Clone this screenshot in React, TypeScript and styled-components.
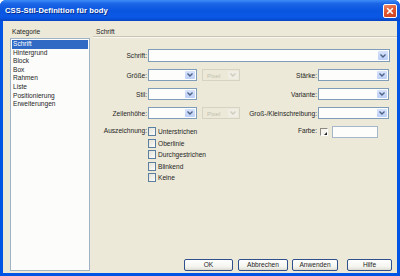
import React from 'react';
import styled, { createGlobalStyle } from 'styled-components';

const GlobalStyle = createGlobalStyle`
  html, body {
    margin: 0;
    padding: 0;
    background: #ffffff;
  }
  body {
    font-family: 'Liberation Sans', Arial, sans-serif;
  }
`;

const palette = {
  xpBlue: '#0054e3',
  face: '#ece9d8',
  field: '#7f9db9',
  text: '#1e1e1e',
  disabled: '#aca899',
  select: '#316ac5',
};

const Window = styled.div`
  width: 400px;
  height: 276px;
  display: flex;
  flex-direction: column;
  background: ${palette.xpBlue};
  border-radius: 6px 6px 0 0;
  overflow: hidden;
`;

const TitleBar = styled.div`
  height: 21px;
  flex-shrink: 0;
  display: flex;
  align-items: center;
  justify-content: space-between;
  padding: 0 3px 0 5px;
  background: linear-gradient(180deg, #3c8df8 0%, #1a64e6 18%, #0a56e0 50%, #0b58e6 80%, #0645c6 100%);
`;

const Title = styled.span`
  color: #ffffff;
  font-weight: bold;
  font-size: 7.6px;
  letter-spacing: 0.1px;
  text-shadow: 1px 1px 0 #0a2f8c;
`;

const CloseButton = styled.div`
  width: 14px;
  height: 14px;
  box-sizing: border-box;
  border: 1px solid #ffffff;
  border-radius: 2px;
  background: linear-gradient(160deg, #ef8a6a 0%, #e2582f 45%, #cc4020 100%);
  display: flex;
  align-items: center;
  justify-content: center;
`;

const Frame = styled.div`
  flex: 1;
  display: flex;
  margin: 0 3px 3px;
  background: ${palette.face};
  font-size: 6.6px;
  color: ${palette.text};
  min-height: 0;
`;

const LeftColumn = styled.div`
  width: 90px;
  flex-shrink: 0;
  display: flex;
  flex-direction: column;
  padding: 7px 0 2px 7px;
  box-sizing: border-box;
`;

const Caption = styled.div`
  height: 8px;
  line-height: 8px;
  margin: 0 0 2px 2px;
`;

const CategoryList = styled.ul`
  flex: 1;
  margin: 0;
  padding: 1px;
  width: 80px;
  box-sizing: border-box;
  list-style: none;
  background: #fcfdfb;
  border: 1px solid #9fb2c6;
`;

const CategoryItem = styled.li<{ $active?: boolean }>`
  height: 8.6px;
  line-height: 8.6px;
  padding-left: 1px;
  background: ${(p) => (p.$active ? palette.select : 'transparent')};
  color: ${(p) => (p.$active ? '#ffffff' : palette.text)};
`;

const RightColumn = styled.div`
  flex: 1;
  display: flex;
  flex-direction: column;
  padding-bottom: 2px;
`;

const PanelHeader = styled.div`
  height: 16px;
  box-sizing: border-box;
  padding: 7px 0 0 3px;
  line-height: 8px;
  border-bottom: 1px solid #c9c5b2;
  box-shadow: 0 1px 0 #f8f7f1;
`;

const Form = styled.div`
  padding-top: 12px;
  display: flex;
  flex-direction: column;
  gap: 7px;
`;

const FieldRow = styled.div<{ $h?: number }>`
  display: grid;
  grid-template-columns: 55px 54px 38px 78px 72px;
  height: ${(p) => p.$h || 12}px;
  align-items: center;
`;

const Label = styled.label<{ $top?: boolean }>`
  text-align: right;
  padding-right: 1px;
  white-space: nowrap;
  align-self: ${(p) => (p.$top ? 'start' : 'center')};
  line-height: 9px;
`;

const TextInput = styled.div<{ $span?: boolean }>`
  grid-column: ${(p) => (p.$span ? '2 / -1' : 'auto')};
  height: 100%;
  box-sizing: border-box;
  border: 1px solid ${palette.field};
  background: #fdfefc;
  display: flex;
  justify-content: flex-end;
  align-items: stretch;
  padding: 1px;
`;

const Select = styled.div<{ $w: number; $disabled?: boolean }>`
  width: ${(p) => p.$w}px;
  height: 12px;
  box-sizing: border-box;
  border: 1px solid ${(p) => (p.$disabled ? '#d6d3c4' : palette.field)};
  background: ${(p) => (p.$disabled ? palette.face : '#fdfefc')};
  color: #c2bfae;
  display: flex;
  align-items: center;
  justify-content: space-between;
  padding: 1px;
`;

const SelectText = styled.span`
  padding-left: 3px;
  font-size: 6.2px;
`;

const ArrowBox = styled.div<{ $disabled?: boolean }>`
  width: 10px;
  height: 100%;
  box-sizing: border-box;
  border-radius: 1px;
  background: ${(p) => (p.$disabled ? '#efede4' : 'linear-gradient(180deg, #d7e3fb 0%, #bccff7 100%)')};
  display: flex;
  align-items: center;
  justify-content: center;
  margin-left: auto;
`;

const CheckList = styled.div`
  grid-column: 2 / 4;
  align-self: start;
  display: flex;
  flex-direction: column;
`;

const CheckItem = styled.div`
  height: 11.6px;
  display: flex;
  align-items: flex-start;
  gap: 2px;
`;

const CheckBox = styled.span`
  width: 8px;
  height: 9px;
  margin-top: 1px;
  box-sizing: border-box;
  border: 1px solid #5d7f9f;
  background: linear-gradient(135deg, #e3e2da 0%, #fbfbf9 100%);
`;

const CheckText = styled.span`
  line-height: 11px;
`;

const ColorField = styled.div`
  align-self: start;
  display: flex;
  align-items: center;
  gap: 4px;
  padding-left: 2px;
  height: 12px;
`;

const Swatch = styled.div`
  width: 8px;
  height: 8px;
  box-sizing: border-box;
  border: 1px solid #8c8a80;
  border-right-color: #ffffff;
  border-bottom-color: #ffffff;
  background: #f4f3ee;
  position: relative;
  &::after {
    content: '';
    position: absolute;
    right: 0;
    bottom: 0;
    border-left: 3px solid transparent;
    border-bottom: 3px solid #222;
  }
`;

const ColorInput = styled.div`
  width: 46px;
  height: 12px;
  box-sizing: border-box;
  border: 1px solid #a5b7c9;
  background: #fdfefc;
`;

const Spacer = styled.div`
  flex: 1;
`;

const ButtonBar = styled.div`
  display: flex;
  justify-content: flex-end;
  padding-right: 5px;
`;

const DialogButton = styled.button<{ $w: number; $gap?: number }>`
  width: ${(p) => p.$w}px;
  height: 12px;
  margin-left: ${(p) => p.$gap ?? 4}px;
  padding: 0;
  box-sizing: border-box;
  border: 1px solid #30508c;
  border-radius: 2px;
  background: linear-gradient(180deg, #ffffff 0%, #f3f3ee 70%, #dcdbd2 100%);
  font-family: 'Liberation Sans', Arial, sans-serif;
  font-size: 6.6px;
  color: ${palette.text};
  line-height: 10px;
`;

const Chevron = ({ disabled }: { disabled?: boolean }) => (
  <svg width="6" height="4" viewBox="0 0 6 4">
    <path d="M0.5 0.5 L3 3 L5.5 0.5" fill="none" stroke={disabled ? '#cfccbe' : '#4d6185'} strokeWidth="1.4" />
  </svg>
);

function Dropdown({ w, text, disabled }: { w: number; text?: string; disabled?: boolean }) {
  return (
    <Select $w={w} $disabled={disabled}>
      {text && <SelectText>{text}</SelectText>}
      <ArrowBox $disabled={disabled}>
        <Chevron disabled={disabled} />
      </ArrowBox>
    </Select>
  );
}

const categories = ['Schrift', 'Hintergrund', 'Block', 'Box', 'Rahmen', 'Liste', 'Positionierung', 'Erweiterungen'];
const decorations = ['Unterstrichen', 'Oberlinie', 'Durchgestrichen', 'Blinkend', 'Keine'];

export default function App() {
  return (
    <>
      <GlobalStyle />
      <Window>
        <TitleBar>
          <Title>CSS-Stil-Definition für body</Title>
          <CloseButton>
            <svg width="8" height="8" viewBox="0 0 8 8">
              <path d="M1.2 1.2 L6.8 6.8 M6.8 1.2 L1.2 6.8" stroke="#ffffff" strokeWidth="1.6" />
            </svg>
          </CloseButton>
        </TitleBar>
        <Frame>
          <LeftColumn>
            <Caption>Kategorie</Caption>
            <CategoryList>
              {categories.map((c, i) => (
                <CategoryItem key={c} $active={i === 0}>
                  {c}
                </CategoryItem>
              ))}
            </CategoryList>
          </LeftColumn>
          <RightColumn>
            <PanelHeader>Schrift</PanelHeader>
            <Form>
              <FieldRow $h={13}>
                <Label>Schrift:</Label>
                <TextInput $span>
                  <ArrowBox>
                    <Chevron />
                  </ArrowBox>
                </TextInput>
              </FieldRow>
              <FieldRow>
                <Label>Größe:</Label>
                <Dropdown w={49} />
                <Dropdown w={38} text="Pixel" disabled />
                <Label>Stärke:</Label>
                <Dropdown w={71} />
              </FieldRow>
              <FieldRow>
                <Label>Stil:</Label>
                <Dropdown w={49} />
                <span />
                <Label>Variante:</Label>
                <Dropdown w={71} />
              </FieldRow>
              <FieldRow>
                <Label>Zeilenhöhe:</Label>
                <Dropdown w={49} />
                <Dropdown w={38} text="Pixel" disabled />
                <Label>Groß-/Kleinschreibung:</Label>
                <Dropdown w={71} />
              </FieldRow>
              <FieldRow $h={60}>
                <Label $top>Auszeichnung:</Label>
                <CheckList>
                  {decorations.map((d) => (
                    <CheckItem key={d}>
                      <CheckBox />
                      <CheckText>{d}</CheckText>
                    </CheckItem>
                  ))}
                </CheckList>
                <Label $top style={{ gridColumn: 4 }}>Farbe:</Label>
                <ColorField>
                  <Swatch />
                  <ColorInput />
                </ColorField>
              </FieldRow>
            </Form>
            <Spacer />
            <ButtonBar>
              <DialogButton $w={49}>OK</DialogButton>
              <DialogButton $w={50} $gap={5}>Abbrechen</DialogButton>
              <DialogButton $w={46} $gap={4}>Anwenden</DialogButton>
              <DialogButton $w={45} $gap={9}>Hilfe</DialogButton>
            </ButtonBar>
          </RightColumn>
        </Frame>
      </Window>
    </>
  );
}
